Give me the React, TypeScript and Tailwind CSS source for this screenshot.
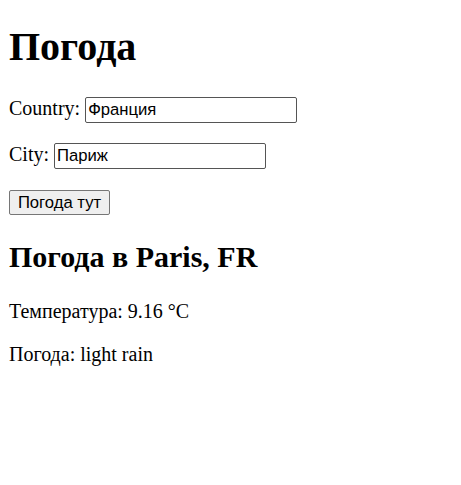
import React from "react";

export default function App() {
  const serif = { fontFamily: '"Liberation Serif", "Times New Roman", serif' } as React.CSSProperties;
  const sans = { fontFamily: '"Liberation Sans", Arial, sans-serif' } as React.CSSProperties;
  return (
    <div className="bg-white text-black w-[461px] h-[485px] pl-[9px] pt-[24px] overflow-hidden" style={serif}>
      <h1 className="text-[40px] font-bold leading-[46px]">Погода</h1>
      <div className="flex items-baseline h-[26px] mt-[27px]">
        <span className="text-[20px] leading-[23px] mr-[5px]">Country:</span>
        <input
          defaultValue="Франция"
          className="w-[212px] h-[26px] border border-[#555555] rounded-[2px] px-[2px] text-[16.67px] text-black bg-white outline-none"
          style={sans}
        />
      </div>
      <div className="flex items-baseline h-[26px] mt-[20px]">
        <span className="text-[20px] leading-[23px] mr-[5px]">City:</span>
        <input
          defaultValue="Париж"
          className="w-[212px] h-[26px] border border-[#555555] rounded-[2px] px-[2px] text-[16.67px] text-black bg-white outline-none"
          style={sans}
        />
      </div>
      <div className="mt-[21px] flex">
        <button
          className="w-[101px] h-[25px] border border-[#767676] rounded-[2px] bg-[#efefef] text-[16.67px] text-black flex items-center justify-center"
          style={sans}
        >
          Погода тут
        </button>
      </div>
      <h2 className="text-[30px] font-bold leading-[34.5px] mt-[25px]">Погода в Paris, FR</h2>
      <p className="text-[20px] leading-[23px] mt-[25px]">Температура: 9.16 °C</p>
      <p className="text-[20px] leading-[23px] mt-[20px]">Погода: light rain</p>
    </div>
  );
}
